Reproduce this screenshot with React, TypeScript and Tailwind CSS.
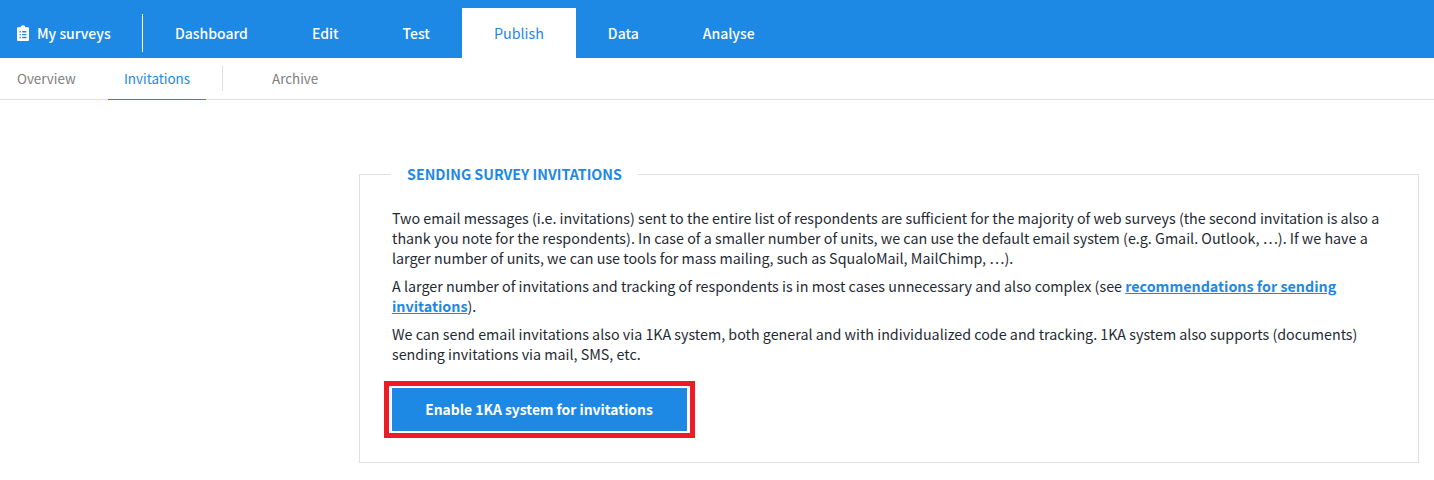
import React from 'react';

const font = 'font-["Noto_Sans_CJK_SC","Noto_Sans",sans-serif]';

const tabs = ['Dashboard', 'Edit', 'Test', 'Publish', 'Data', 'Analyse'];

const App = () => {
  return (
    <div className={`${font} w-[1434px] h-[480px] bg-white overflow-hidden text-[14.31px] leading-5 text-[#1f2a33]`}>
      {/* Top navigation */}
      <div className="h-[58px] bg-[#1e88e5] flex items-end text-white">
        <div className="h-[52px] w-[143px] flex items-start pl-[17px] shrink-0 pt-[6px] self-start mt-2">
          <div className="flex items-center gap-[8px] w-[126px] border-r border-white h-[38px] font-medium text-[14px]">
            <svg width="12" height="16" viewBox="0 0 14 17" preserveAspectRatio="none" className="shrink-0 -mt-px">
              <path
                fill="#fff"
                fillRule="evenodd"
                d="M1 2.5h3.2C4.4 1.2 5.5.3 7 .3s2.6.9 2.8 2.2H13a1 1 0 0 1 1 1V16a1 1 0 0 1-1 1H1a1 1 0 0 1-1-1V3.500a1 1 0 0 1 1-1ZM3 6.500v1.500h1.500V6.500ZM6 6.500v1.500h5V6.500ZM3 9.500v1.500h1.500V9.500ZM6 9.500v1.500h5V9.500ZM3 12.500v1.500h1.500V12.500ZM6 12.500v1.500h5V12.500Z"
              />
            </svg>
            <span className="whitespace-nowrap">My surveys</span>
          </div>
        </div>
        <div className="flex h-[50px]">
          {tabs.map((t) => (
            <div
              key={t}
              className={
                t === 'Publish'
                  ? 'px-8 flex items-center bg-white text-[#1e88e5]'
                  : 'px-8 flex items-center font-medium text-[14px]'
              }
            >
              {t}
            </div>
          ))}
        </div>
      </div>

      {/* Sub navigation */}
      <div className="h-[42px] border-b border-[#e0e0e0] flex text-[#7d7d7d] text-[13.4px]">
        <div className="pl-[17px] pb-px w-[108px] flex items-center">Overview</div>
        <div className="flex items-center pb-px text-[#1e88e5] border-b border-[#1e88e5] h-[42px] w-[98px] justify-center">Invitations</div>
        <div className="w-px h-[25px] bg-[#e0e0e0] mt-2 ml-4"></div>
        <div className="pl-[49px] pb-px flex items-center">Archive</div>
      </div>

      {/* Content */}
      <div className="pt-[64px] pl-[359px]">
        <fieldset className="w-[1060px] h-[299px] border border-[#e0e0e0] px-8">
          <legend className="px-4 font-semibold text-[#1e88e5] text-[14.25px] leading-5 -ml-px">
            SENDING SURVEY INVITATIONS
          </legend>
          <p className="mt-[24px] mb-2">
            Two email messages (i.e. invitations) sent to the entire list of respondents are sufficient for the majority of web surveys (the second invitation is also a thank you note for the respondents). In case of a smaller number of units, we can use the default email system (e.g. Gmail. Outlook, …). If we have a larger number of units, we can use tools for mass mailing, such as SqualoMail, MailChimp, …).
          </p>
          <p className="mb-2">
            A larger number of invitations and tracking of respondents is in most cases unnecessary and also complex (see{' '}
            <a className="font-bold text-[#1e88e5] underline">recommendations for sending invitations</a>).
          </p>
          <p>
            We can send email invitations also via 1KA system, both general and with individualized code and tracking. 1KA system also supports (documents) sending invitations via mail, SMS, etc.
          </p>
          <div className="mt-[17px] -ml-2 w-[311px] h-[57px] border-[5px] border-[#ed1c24] px-[3px] py-[2px]">
            <button className="w-full h-full pb-[2px] pr-[1px] bg-[#1e88e5] text-white font-bold text-[13.9px]">
              Enable 1KA system for invitations
            </button>
          </div>
        </fieldset>
      </div>
    </div>
  );
};

export default App;
